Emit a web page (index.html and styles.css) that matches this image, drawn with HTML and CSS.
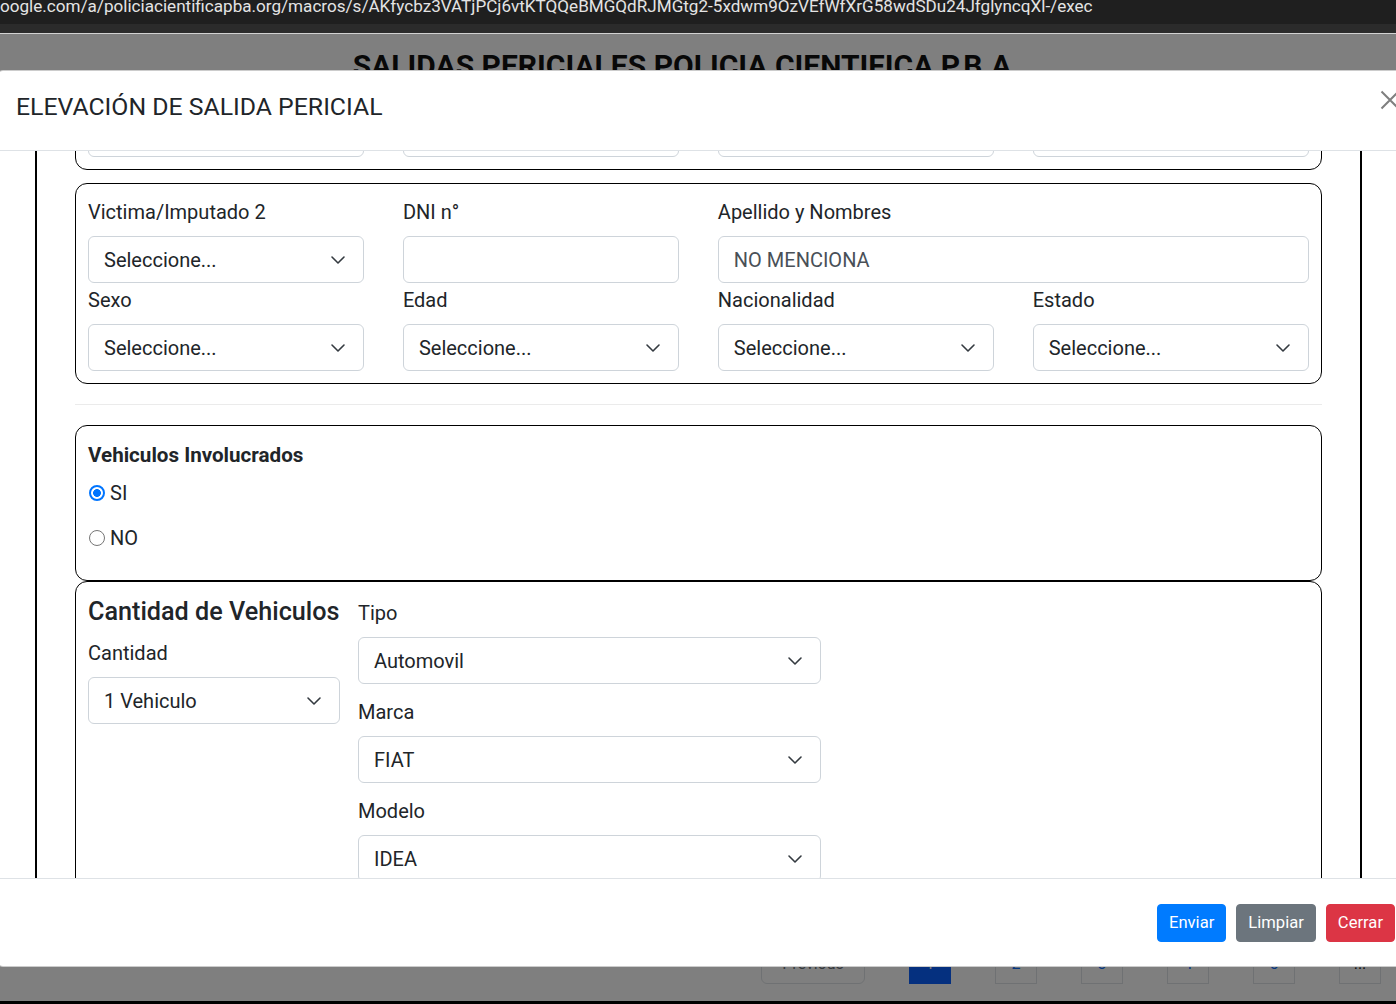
FILE: index.html
```html
<!DOCTYPE html>
<html lang="es">
<head>
<meta charset="utf-8">
<title>Salidas Periciales</title>
<link rel="stylesheet" href="styles.css">
</head>
<body>
<div class="urlbar"><span class="urlbar-text">oogle.com/a/policiacientificapba.org/macros/s/AKfycbz3VATjPCj6vtKTQQeBMGQdRJMGtg2-5xdwm9OzVEfWfXrG58wdSDu24JfglyncqXl-/exec</span></div>
<div class="tabstrip"></div>
<div class="divider"></div>
<main class="page">
  <h1 class="page-title">SALIDAS PERICIALES POLICIA CIENTIFICA P.B.A</h1>
  <nav class="pager">
    <span class="pg pg-prev">Previous</span>
    <span class="pg pg-active">1</span>
    <span class="pg">2</span>
    <span class="pg">3</span>
    <span class="pg">4</span>
    <span class="pg">5</span>
    <span class="pg pg-more">...</span>
  </nav>
  <div class="backdrop"></div>
  <div class="modal">
    <header class="modal-header">
      <h5 class="modal-title">ELEVACIÓN DE SALIDA PERICIAL</h5>
      <button class="btn-close" aria-label="Cerrar"><svg viewBox="0 0 20 20"><path d="M1.5 1.5L18.5 18.5M18.5 1.5L1.5 18.5" stroke="#000" stroke-opacity=".5" stroke-width="2" fill="none"/></svg></button>
    </header>
    <div class="modal-body">
      <div class="form-frame">
        <section class="card person-card">
          <div class="person-grid">
            <div class="field"><label class="form-label">Victima/Imputado 1</label><div class="select"><span>Victima</span><svg viewBox="0 0 16 12"><path d="M2 3l6 6 6-6" fill="none" stroke="#343a40" stroke-width="1.6" stroke-linecap="round" stroke-linejoin="round"/></svg></div></div>
            <div class="field"><label class="form-label">DNI n°</label><input class="form-control" type="text" value=""></div>
            <div class="field span-2"><label class="form-label">Apellido y Nombres</label><input class="form-control" type="text" value="NO MENCIONA"></div>
            <div class="field"><label class="form-label">Sexo</label><div class="select"><span>Seleccione...</span><svg viewBox="0 0 16 12"><path d="M2 3l6 6 6-6" fill="none" stroke="#343a40" stroke-width="1.6" stroke-linecap="round" stroke-linejoin="round"/></svg></div></div>
            <div class="field"><label class="form-label">Edad</label><div class="select"><span>Seleccione...</span><svg viewBox="0 0 16 12"><path d="M2 3l6 6 6-6" fill="none" stroke="#343a40" stroke-width="1.6" stroke-linecap="round" stroke-linejoin="round"/></svg></div></div>
            <div class="field"><label class="form-label">Nacionalidad</label><div class="select"><span>Seleccione...</span><svg viewBox="0 0 16 12"><path d="M2 3l6 6 6-6" fill="none" stroke="#343a40" stroke-width="1.6" stroke-linecap="round" stroke-linejoin="round"/></svg></div></div>
            <div class="field"><label class="form-label">Estado</label><div class="select"><span>Seleccione...</span><svg viewBox="0 0 16 12"><path d="M2 3l6 6 6-6" fill="none" stroke="#343a40" stroke-width="1.6" stroke-linecap="round" stroke-linejoin="round"/></svg></div></div>
          </div>
        </section>

        <section class="card person-card">
          <div class="person-grid">
            <div class="field"><label class="form-label">Victima/Imputado 2</label><div class="select"><span>Seleccione...</span><svg viewBox="0 0 16 12"><path d="M2 3l6 6 6-6" fill="none" stroke="#343a40" stroke-width="1.6" stroke-linecap="round" stroke-linejoin="round"/></svg></div></div>
            <div class="field"><label class="form-label">DNI n°</label><input class="form-control" type="text" value=""></div>
            <div class="field span-2"><label class="form-label">Apellido y Nombres</label><input class="form-control" type="text" value="NO MENCIONA"></div>
            <div class="field"><label class="form-label">Sexo</label><div class="select"><span>Seleccione...</span><svg viewBox="0 0 16 12"><path d="M2 3l6 6 6-6" fill="none" stroke="#343a40" stroke-width="1.6" stroke-linecap="round" stroke-linejoin="round"/></svg></div></div>
            <div class="field"><label class="form-label">Edad</label><div class="select"><span>Seleccione...</span><svg viewBox="0 0 16 12"><path d="M2 3l6 6 6-6" fill="none" stroke="#343a40" stroke-width="1.6" stroke-linecap="round" stroke-linejoin="round"/></svg></div></div>
            <div class="field"><label class="form-label">Nacionalidad</label><div class="select"><span>Seleccione...</span><svg viewBox="0 0 16 12"><path d="M2 3l6 6 6-6" fill="none" stroke="#343a40" stroke-width="1.6" stroke-linecap="round" stroke-linejoin="round"/></svg></div></div>
            <div class="field"><label class="form-label">Estado</label><div class="select"><span>Seleccione...</span><svg viewBox="0 0 16 12"><path d="M2 3l6 6 6-6" fill="none" stroke="#343a40" stroke-width="1.6" stroke-linecap="round" stroke-linejoin="round"/></svg></div></div>
          </div>
        </section>

        <hr class="sep">

        <section class="card vi-card">
          <div class="vi-title">Vehiculos Involucrados</div>
          <label class="radio-row"><input class="radio" type="radio" name="veh" checked><span>SI</span></label>
          <label class="radio-row"><input class="radio" type="radio" name="veh"><span>NO</span></label>
        </section>

        <section class="card veh-card">
          <div class="veh-grid">
            <div class="veh-col">
              <h4 class="veh-heading">Cantidad de Vehiculos</h4>
              <label class="form-label">Cantidad</label>
              <div class="select"><span>1 Vehiculo</span><svg viewBox="0 0 16 12"><path d="M2 3l6 6 6-6" fill="none" stroke="#343a40" stroke-width="1.6" stroke-linecap="round" stroke-linejoin="round"/></svg></div>
            </div>
            <div class="veh-col">
              <div class="veh-field"><label class="form-label">Tipo</label><div class="select"><span>Automovil</span><svg viewBox="0 0 16 12"><path d="M2 3l6 6 6-6" fill="none" stroke="#343a40" stroke-width="1.6" stroke-linecap="round" stroke-linejoin="round"/></svg></div></div>
              <div class="veh-field"><label class="form-label">Marca</label><div class="select"><span>FIAT</span><svg viewBox="0 0 16 12"><path d="M2 3l6 6 6-6" fill="none" stroke="#343a40" stroke-width="1.6" stroke-linecap="round" stroke-linejoin="round"/></svg></div></div>
              <div class="veh-field"><label class="form-label">Modelo</label><div class="select"><span>IDEA</span><svg viewBox="0 0 16 12"><path d="M2 3l6 6 6-6" fill="none" stroke="#343a40" stroke-width="1.6" stroke-linecap="round" stroke-linejoin="round"/></svg></div></div>
              <div class="veh-field"><label class="form-label">Dominio</label><input class="form-control" type="text" value=""></div>
            </div>
          </div>
        </section>
      </div>
    </div>
    <footer class="modal-footer">
      <button class="btn btn-primary" type="button">Enviar</button>
      <button class="btn btn-secondary" type="button">Limpiar</button>
      <button class="btn btn-danger" type="button">Cerrar</button>
    </footer>
  </div>
</main>
<div class="bottom-edge"></div>
</body>
</html>
```

FILE: styles.css
```css
* { box-sizing: border-box; }
html, body { margin: 0; padding: 0; }
body {
  width: 1396px;
  height: 1004px;
  overflow: hidden;
  display: flex;
  flex-direction: column;
  background: #000;
  font-family: Roboto, "Segoe UI", "Liberation Sans", sans-serif;
  color: #212529;
}

/* browser chrome */
.urlbar {
  flex: none;
  height: 24px;
  background: #1f1f1f;
  color: #e4e4e4;
  font-size: 17.1px;
  line-height: 18px;
  white-space: nowrap;
  overflow: hidden;
}
.urlbar-text { display: block; margin-top: -3px; }
.tabstrip { flex: none; height: 9px; background: #2b2b2b; }
.divider { flex: none; height: 1px; background: #d2d2d2; }
.bottom-edge { flex: none; height: 3px; background: #000; }

/* underlying page */
.page {
  flex: 1;
  position: relative;
  background: #fff;
  display: flex;
  flex-direction: column;
  overflow: hidden;
}
.page-title {
  margin: 0;
  padding: 14px 32px 0 0;
  font-size: 30px;
  line-height: 36px;
  font-weight: 700;
  text-align: center;
  color: #111;
}
.pager {
  margin-top: auto;
  display: flex;
  justify-content: flex-end;
  gap: 44px;
  padding: 0 15px 17px 0;
}
.pg {
  width: 42px;
  height: 42px;
  display: flex;
  align-items: center;
  justify-content: center;
  border: 1px solid #dee2e6;
  color: #0d6efd;
  font-size: 16px;
}
.pg-prev { width: 104px; border-radius: 6px; color: #6c757d; }
.pg-active { background: #0a60fe; border-color: #0a60fe; color: #fff; }
.pg-more { color: #212529; }

.backdrop { position: absolute; inset: 0; background: rgba(0, 0, 0, .5); }

/* modal */
.modal {
  position: absolute;
  top: 36px;
  left: -3px;
  width: 1418px;
  height: 897px;
  background: #fff;
  border: 1px solid rgba(0, 0, 0, .2);
  border-radius: 6px;
  display: flex;
  flex-direction: column;
  overflow: hidden;
}
.modal-header {
  flex: none;
  height: 80px;
  display: flex;
  align-items: flex-start;
  padding: 17px 14px 0 18px;
  border-bottom: 1px solid #dee2e6;
}
.modal-title { margin: 0; font-size: 24.8px; line-height: 37.5px; font-weight: 400; color: #212529; }
.btn-close {
  display: block;
  margin: 2px 0 0 auto;
  padding: 0;
  border: 0;
  background: none;
  width: 20px;
  height: 20px;
}
.btn-close svg { display: block; width: 20px; height: 20px; }

.modal-body {
  flex: none;
  height: 727px;
  overflow: hidden;
  padding: 0 52px 0 37px;
}
.form-frame {
  margin-top: -204px;
  border: 2px solid #000;
  padding: 20px 38px;
}

.modal-footer {
  flex: none;
  height: 88px;
  border-top: 1px solid #dee2e6;
  display: flex;
  justify-content: flex-end;
  align-items: center;
  gap: 10px;
  padding: 0 19px 0 0;
}
.btn {
  height: 38px;
  padding: 0 11px;
  border: 1px solid transparent;
  border-radius: 4px;
  font-family: inherit;
  font-size: 16.6px;
  line-height: 36px;
  color: #fff;
}
.btn-primary { background: #007bff; border-color: #007bff; }
.btn-secondary { background: #6c757d; border-color: #6c757d; }
.btn-danger { background: #dc3545; border-color: #dc3545; }

/* form cards */
.card {
  border: 1px solid #000;
  border-radius: 12px;
  padding: 12px;
  background: #fff;
}
.person-card { margin-bottom: 13px; }
.person-grid {
  display: grid;
  grid-template-columns: repeat(4, 1fr);
  column-gap: 38.67px;
  row-gap: 1px;
}
.span-2 { grid-column: span 2; }

.form-label {
  display: block;
  font-size: 20px;
  line-height: 30px;
  padding-top: 1px;
  margin-bottom: 9px;
  white-space: nowrap;
}
.select {
  display: flex;
  align-items: center;
  justify-content: space-between;
  height: 47px;
  padding: 0 17px 0 15px;
  border: 1px solid #ced4da;
  border-radius: 6px;
  background: #fff;
  font-size: 20px;
  color: #212529;
  white-space: nowrap;
}
.select svg { flex: none; width: 16px; height: 12px; }
.form-control {
  display: block;
  width: 100%;
  height: 47px;
  padding: 0 15px;
  border: 1px solid #ced4da;
  border-radius: 6px;
  font-family: inherit;
  font-size: 20px;
  color: #495057;
  background: #fff;
}

.sep { height: 0; margin: 20px 0; border: 0; border-top: 1px solid rgba(0, 0, 0, .08); }

.vi-title { margin: 2px 0 8px; font-size: 20.6px; line-height: 30px; font-weight: 700; }
.radio-row {
  display: flex;
  align-items: center;
  gap: 5px;
  height: 30px;
  margin-bottom: 15px;
  font-size: 20px;
}
.radio {
  appearance: none;
  -webkit-appearance: none;
  flex: none;
  width: 16px;
  height: 16px;
  margin: 0 0 0 1px;
  border-radius: 50%;
  border: 1px solid #767676;
  background: #fff;
}
.radio:checked {
  border: 2px solid #0075ff;
  background: radial-gradient(circle, #0075ff 0 3.6px, #fff 4.2px);
}

.veh-card { padding-top: 15px; }
.veh-grid {
  display: grid;
  grid-template-columns: 252px 463px;
  column-gap: 18px;
  align-items: start;
}
.veh-heading {
  margin: 0 0 10px;
  font-size: 25.2px;
  line-height: 30px;
  font-weight: 500;
  white-space: nowrap;
}
.veh-field { margin-bottom: 12px; }
```
